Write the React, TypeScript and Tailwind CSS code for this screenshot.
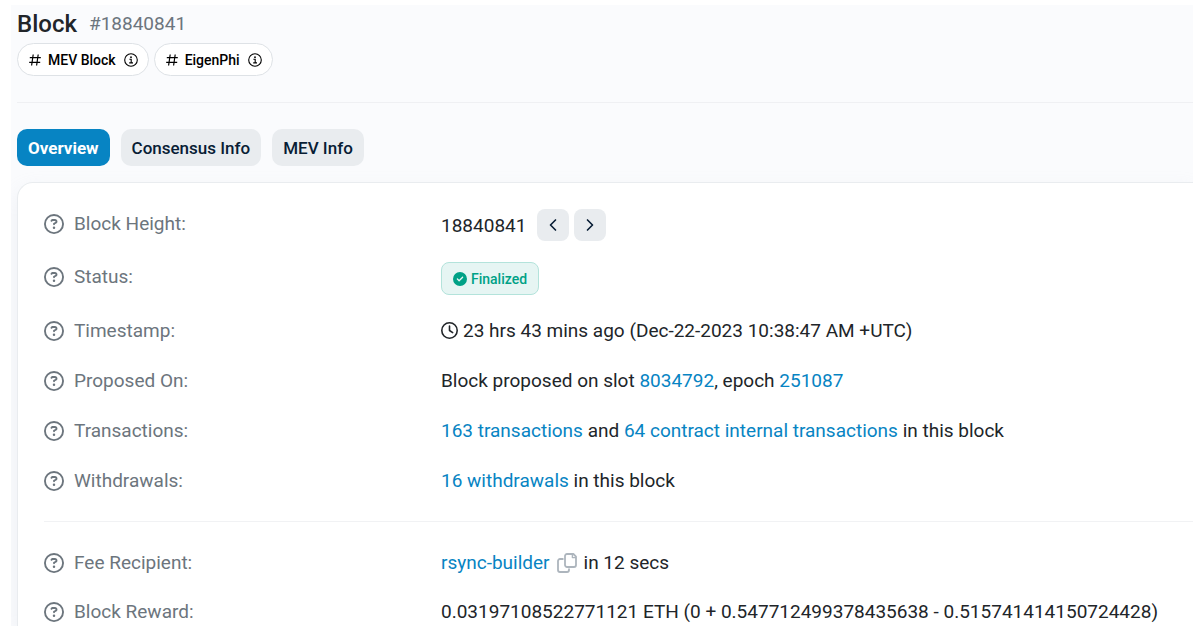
import type { ReactNode } from "react";
import { ChevronLeft, ChevronRight } from "lucide-react";
import { FaCircleCheck, FaRegCircleQuestion, FaRegClock } from "react-icons/fa6";

const link = "text-[#0784c3] hover:text-[#066a9c]";

function HashIcon() {
  return (
    <svg viewBox="0 0 14 14" className="size-[14px]" fill="none" stroke="currentColor" strokeWidth="1.2">
      <path d="M5.2 1.5 3.6 12.5M10.2 1.5 8.6 12.5M1.8 4.7h11M1.2 9.3h11" />
    </svg>
  );
}

function InfoIcon() {
  return (
    <svg viewBox="0 0 14 14" className="size-[14px]" fill="none" stroke="currentColor" strokeWidth="1.1">
      <circle cx="7" cy="7" r="6.3" />
      <path d="M5.4 6.3h1.8v3.5M5.2 9.9h3.8" />
      <circle cx="7" cy="4.2" r="0.9" fill="currentColor" stroke="none" />
    </svg>
  );
}

function CopyIcon() {
  return (
    <svg viewBox="0 0 20 20" className="size-5" fill="none" stroke="currentColor" strokeWidth="1.8" strokeLinejoin="round">
      <path d="M10 1h6.4L19 3.6V12a2 2 0 0 1-2 2h-7a2 2 0 0 1-2-2V3a2 2 0 0 1 2-2Z" />
      <path d="M15.4 1v3.6H19" strokeWidth="1.4" />
      <path d="M6.5 6H3a2 2 0 0 0-2 2v9a2 2 0 0 0 2 2h7a2 2 0 0 0 2-2v-1.5" />
    </svg>
  );
}

function Tag({ label }: { label: string }) {
  return (
    <a
      href="#"
      className="flex h-[33px] items-center rounded-full border border-[#dee2e6] bg-white px-[10px] text-sm font-medium text-black"
    >
      <HashIcon />
      <span className="mr-2 ml-[6px]">{label}</span>
      <InfoIcon />
    </a>
  );
}

function Row({ label, children }: { label: string; children: ReactNode }) {
  return (
    <div className="grid grid-cols-[397px_1fr] items-start">
      <dt className="flex items-center gap-[10px] text-[#6c757d]">
        <FaRegCircleQuestion className="size-5" />
        {label}:
      </dt>
      <dd className="flex items-center whitespace-pre">{children}</dd>
    </div>
  );
}

const tabs = ["Overview", "Consensus Info", "MEV Info"];

export default function App() {
  return (
    <div className="overflow-hidden bg-white pt-[5px] pb-[7px] pl-[11px] font-[Roboto,sans-serif] text-[19px] leading-[29px] text-[#212529]">
      <main className="overflow-hidden bg-[#fafbfd] pl-[6px]">
        <header className="border-b border-[#eff0f3] pb-[26px]">
          <h1 className="flex items-center gap-3 pt-[5px] text-2xl leading-7 font-medium">
            Block
            <span className="text-[19px] font-normal text-[#6c757d]">#18840841</span>
          </h1>
          <div className="mt-[5px] flex gap-[5px]">
            <Tag label="MEV Block" />
            <Tag label="EigenPhi" />
          </div>
        </header>

        <nav className="mt-[26px] flex gap-[11px]">
          {tabs.map((tab, i) => (
            <button
              key={tab}
              className={`h-[37px] rounded-[10px] px-[11px] text-[17px] leading-5 ${
                i === 0 ? "bg-[#0784c3] font-bold text-white" : "bg-[#e9ecef] font-medium text-[#081d35]"
              }`}
            >
              {tab}
            </button>
          ))}
        </nav>

        <section className="mt-4 rounded-tl-2xl border-t border-l border-[#e9ecef] bg-white pt-[26px] pl-[26px] shadow-[0_8px_19px_rgba(189,197,209,0.2)]">
          <dl className="flex flex-col gap-[21px] pb-[26px]">
            <Row label="Block Height">
              18840841
              <button aria-label="Previous block" className="ml-[11px] grid size-8 place-items-center rounded-lg bg-[#e9ecef] text-[#081d35]">
                <ChevronLeft size={20} strokeWidth={2} />
              </button>
              <button aria-label="Next block" className="ml-[5px] grid size-8 place-items-center rounded-lg bg-[#e9ecef] text-[#081d35]">
                <ChevronRight size={20} strokeWidth={2} />
              </button>
            </Row>
            <Row label="Status">
              <span className="flex h-[33px] items-center gap-1 rounded-lg border border-[#b3e3db] bg-[#e6f5f3] px-[11px] text-sm font-medium text-[#00a186]">
                <FaCircleCheck className="size-[14px]" />
                Finalized
              </span>
            </Row>
            <Row label="Timestamp">
              <FaRegClock className="mr-[5px] size-[17px]" />
              23 hrs 43 mins ago (Dec-22-2023 10:38:47 AM +UTC)
            </Row>
            <Row label="Proposed On">
              Block proposed on slot <a href="#" className={link}>8034792</a>, epoch{" "}
              <a href="#" className={link}>251087</a>
            </Row>
            <Row label="Transactions">
              <a href="#" className={link}>163 transactions</a> and{" "}
              <a href="#" className={link}>64 contract internal transactions</a> in this block
            </Row>
            <Row label="Withdrawals">
              <a href="#" className={link}>16 withdrawals</a> in this block
            </Row>
          </dl>
          <dl className="flex flex-col gap-5 border-t border-[#f1f2f4] pt-[26px]">
            <Row label="Fee Recipient">
              <a href="#" className={link}>rsync-builder</a>
              <button aria-label="Copy address" className="mr-[7px] ml-[7px] text-[#adb5bd]">
                <CopyIcon />
              </button>
              in 12 secs
            </Row>
            <Row label="Block Reward">
              0.03197108522771121 ETH (0 + 0.547712499378435638 - 0.515741414150724428)
            </Row>
          </dl>
        </section>
      </main>
    </div>
  );
}
